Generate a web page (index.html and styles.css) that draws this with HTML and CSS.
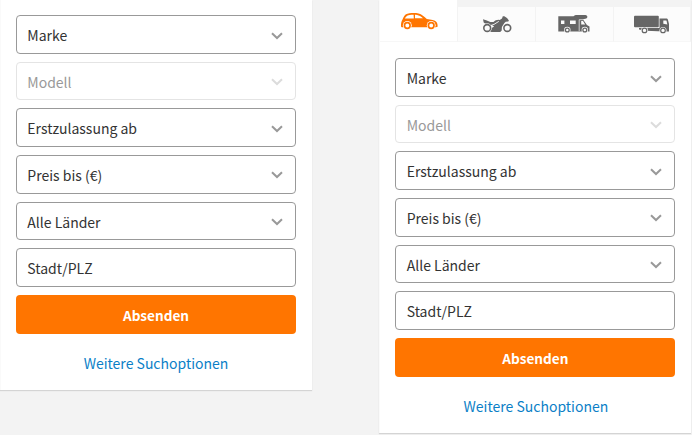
FILE: index.html
```html
<!DOCTYPE html>
<html lang="de">
<head>
<meta charset="utf-8">
<title>Fahrzeugsuche</title>
<link rel="stylesheet" href="styles.css">
</head>
<body>
<svg class="defs" width="0" height="0">
  <symbol id="chevron" viewBox="0 0 12 8"><path d="M1 1.2 6 6l5-4.8" fill="none" stroke="currentColor" stroke-width="2"/></symbol>
</svg>
<main class="page">
  <form class="panel">
    <div class="fields">
      <div class="field">Marke<svg class="chevron"><use href="#chevron"/></svg></div>
      <div class="field disabled">Modell<svg class="chevron"><use href="#chevron"/></svg></div>
      <div class="field">Erstzulassung ab<svg class="chevron"><use href="#chevron"/></svg></div>
      <div class="field">Preis bis (€)<svg class="chevron"><use href="#chevron"/></svg></div>
      <div class="field">Alle Länder<svg class="chevron"><use href="#chevron"/></svg></div>
      <div class="field">Stadt/PLZ</div>
      <div class="submit">Absenden</div>
    </div>
    <a class="more">Weitere Suchoptionen</a>
  </form>
  <form class="panel tabbed">
    <nav class="tabs">
      <div class="tab active">
        <svg class="icon" viewBox="395 5 46 30">
          <path fill="currentColor" fill-rule="evenodd" d="M400.200 27c-.6-2 .1-6 1.300-7.500 1-2.600 2.200-4.300 3.500-5.200 2.500-1.300 8.500-1.700 12.500-.9 3.200.8 5.800 3.100 8.300 5.500 4.200.4 8.200 1.200 9.700 3 .8 1.200 1.200 2.900 1.100 4.600-.5.600-1.400.8-2.200.8H402c-.8 0-1.500-.1-1.800-.3zM403.800 18.500l9-.1-.2-3.700c-3.100 0-5 .2-6 .7-1.100.8-2.100 1.800-2.800 3.100zM414 18.300h8c-2-2-3.900-3-5.900-3.400-.9-.2-1.500-.2-2.100-.2z"/>
          <g fill="#fff"><circle cx="406.300" cy="25.300" r="4.400"/><circle cx="430.200" cy="25.300" r="4.400"/></g>
          <g fill="none" stroke="currentColor" stroke-width="1.700"><circle cx="406.300" cy="25.500" r="2.800"/><circle cx="430.200" cy="25.500" r="2.800"/></g>
        </svg>
      </div>
      <div class="tab">
        <svg class="icon" viewBox="474 5 46 30">
          <path fill="currentColor" d="M483 19.200c2.700.8 5.100 1.700 7.300 2.800l3.200-.1c1.500-1.200 3-2.100 5-2.100l1.200.3 2.300-1.500.8-2.300h1.500l2.700 1.600 1.900 2.500-.6 1-2.600.3-1.500 1.500-2.300 3.800-.2 3.500-1.500 1.500h-8.700l-1.600-.6.6-2.700 3.600-2.300-2.300-1.500-3.500.6-3.200-2-1.400-.9z"/>
          <path d="m490.500 25.600 3.500-1.200 4.800-3" fill="none" stroke="#fcfcfc" stroke-width=".9"/>
          <g fill="#fcfcfc"><circle cx="487.200" cy="28" r="4.700"/><circle cx="507.300" cy="28" r="4.700"/></g>
          <g fill="none" stroke="currentColor" stroke-width="1.600"><circle cx="487.200" cy="28" r="3.400"/><circle cx="507.300" cy="28" r="3.400"/></g>
        </svg>
      </div>
      <div class="tab">
        <svg class="icon" viewBox="552 5 46 30">
          <path fill="currentColor" fill-rule="evenodd" d="M558.300 16.300h15.200c.8-.9 2-1.300 3.500-1.300h8.500c2 .2 2.300 2 1.400 3.100-.7.800-2.200 1.100-4 1.200l4 5.800 2.600 1.500v4.800h-31.200zm2.700 4.200v3.400h3.400v-3.400zm9 0v3.400h5.700v-3.400zm11.200.5v3.600h4l-2.200-3.600z"/>
          <path d="M579.200 31v-11.300h4" fill="none" stroke="#fcfcfc" stroke-width=".7"/>
          <g fill="#fcfcfc"><circle cx="567.300" cy="30" r="3.200"/><circle cx="584.800" cy="30" r="3.200"/></g>
          <g fill="none" stroke="currentColor" stroke-width="1.300"><circle cx="567.300" cy="30" r="1.900"/><circle cx="584.800" cy="30" r="1.900"/></g>
        </svg>
      </div>
      <div class="tab">
        <svg class="icon" viewBox="630 5 46 30">
          <rect x="635" y="15.700" width="24.800" height="11.500" rx="1" fill="currentColor"/>
          <path fill="currentColor" fill-rule="evenodd" d="M640 28h20.500v-9.500h6.500c1.200 0 1.700.4 2 1.500l1 4v7.500h-4.500l-19-.8-6.500-1.200zm24.300-7.500v3.300l4 .7-.7-3.500c-.2-.5-.4-.5-.9-.5z"/>
          <g fill="#fcfcfc"><circle cx="645.500" cy="30.400" r="3.500"/><circle cx="664" cy="30.400" r="3.500"/></g>
          <g fill="none" stroke="currentColor" stroke-width="1.200"><circle cx="645.500" cy="30.400" r="2.300"/><circle cx="664" cy="30.400" r="2.300"/></g>
        </svg>
      </div>
    </nav>
    <div class="fields">
      <div class="field">Marke<svg class="chevron"><use href="#chevron"/></svg></div>
      <div class="field disabled">Modell<svg class="chevron"><use href="#chevron"/></svg></div>
      <div class="field">Erstzulassung ab<svg class="chevron"><use href="#chevron"/></svg></div>
      <div class="field">Preis bis (€)<svg class="chevron"><use href="#chevron"/></svg></div>
      <div class="field">Alle Länder<svg class="chevron"><use href="#chevron"/></svg></div>
      <div class="field">Stadt/PLZ</div>
      <div class="submit">Absenden</div>
    </div>
    <a class="more">Weitere Suchoptionen</a>
  </form>
</main>
</body>
</html>
```
FILE: styles.css
```css
* { box-sizing: border-box; }
body {
  margin: 0;
  height: 435px;
  overflow: hidden;
  background: #f3f3f3;
  color: #333;
  font: 14px/20px "Noto Sans CJK SC", "Noto Sans", sans-serif;
}
.defs { display: block; }
.page {
  display: flex;
  align-items: flex-start;
  gap: 67.4px;
}
.panel {
  flex: none;
  width: 312px;
  height: 390px;
  padding: 15px 16px 0 15px;
  background: #fff;
  border-left: 1px solid #fafafa;
  box-shadow: 0 1px 1px #d4d4d4;
}
.tabbed {
  height: 433px;
  padding: 0;
}
.tabbed .fields { margin: 16px 16px 0 15px; }
.fields {
  display: grid;
  grid-auto-rows: 38.67px;
  gap: 8px;
}
.field {
  display: flex;
  align-items: center;
  justify-content: space-between;
  padding: 1.4px 12px 0 10.3px;
  border: 1px solid #999;
  border-radius: 4px;
  background: #fff;
}
.disabled {
  color: #999;
  border-color: #e4e4e4;
}
.chevron {
  width: 12px;
  height: 8px;
  margin-top: 1px;
  color: #999;
}
.disabled .chevron { color: #dcdcdc; }
.submit {
  display: flex;
  align-items: center;
  justify-content: center;
  padding-top: 2px;
  border-radius: 4px;
  background: #ff7500;
  color: #fff;
  font-size: 13.6px;
  font-weight: 700;
}
.more {
  display: block;
  margin-top: 19.5px;
  text-align: center;
  color: #0b7fc7;
}
.tabs {
  display: grid;
  grid-template-columns: repeat(3, 78px) 1fr;
  height: 42px;
  padding-top: 7px;
  background: #f3f3f3;
}
.tab {
  display: flex;
  align-items: flex-start;
  justify-content: center;
  background: #fcfcfc;
  color: #666;
  border-right: 1px solid #f3f3f3;
  border-bottom: 1px solid #f7f7f7;
}
.active {
  margin-top: -7px;
  padding-top: 7px;
  background: #fff;
  color: #ff7500;
}
.icon {
  width: 46px;
  height: 30px;
  margin-top: -2px;
}
```
